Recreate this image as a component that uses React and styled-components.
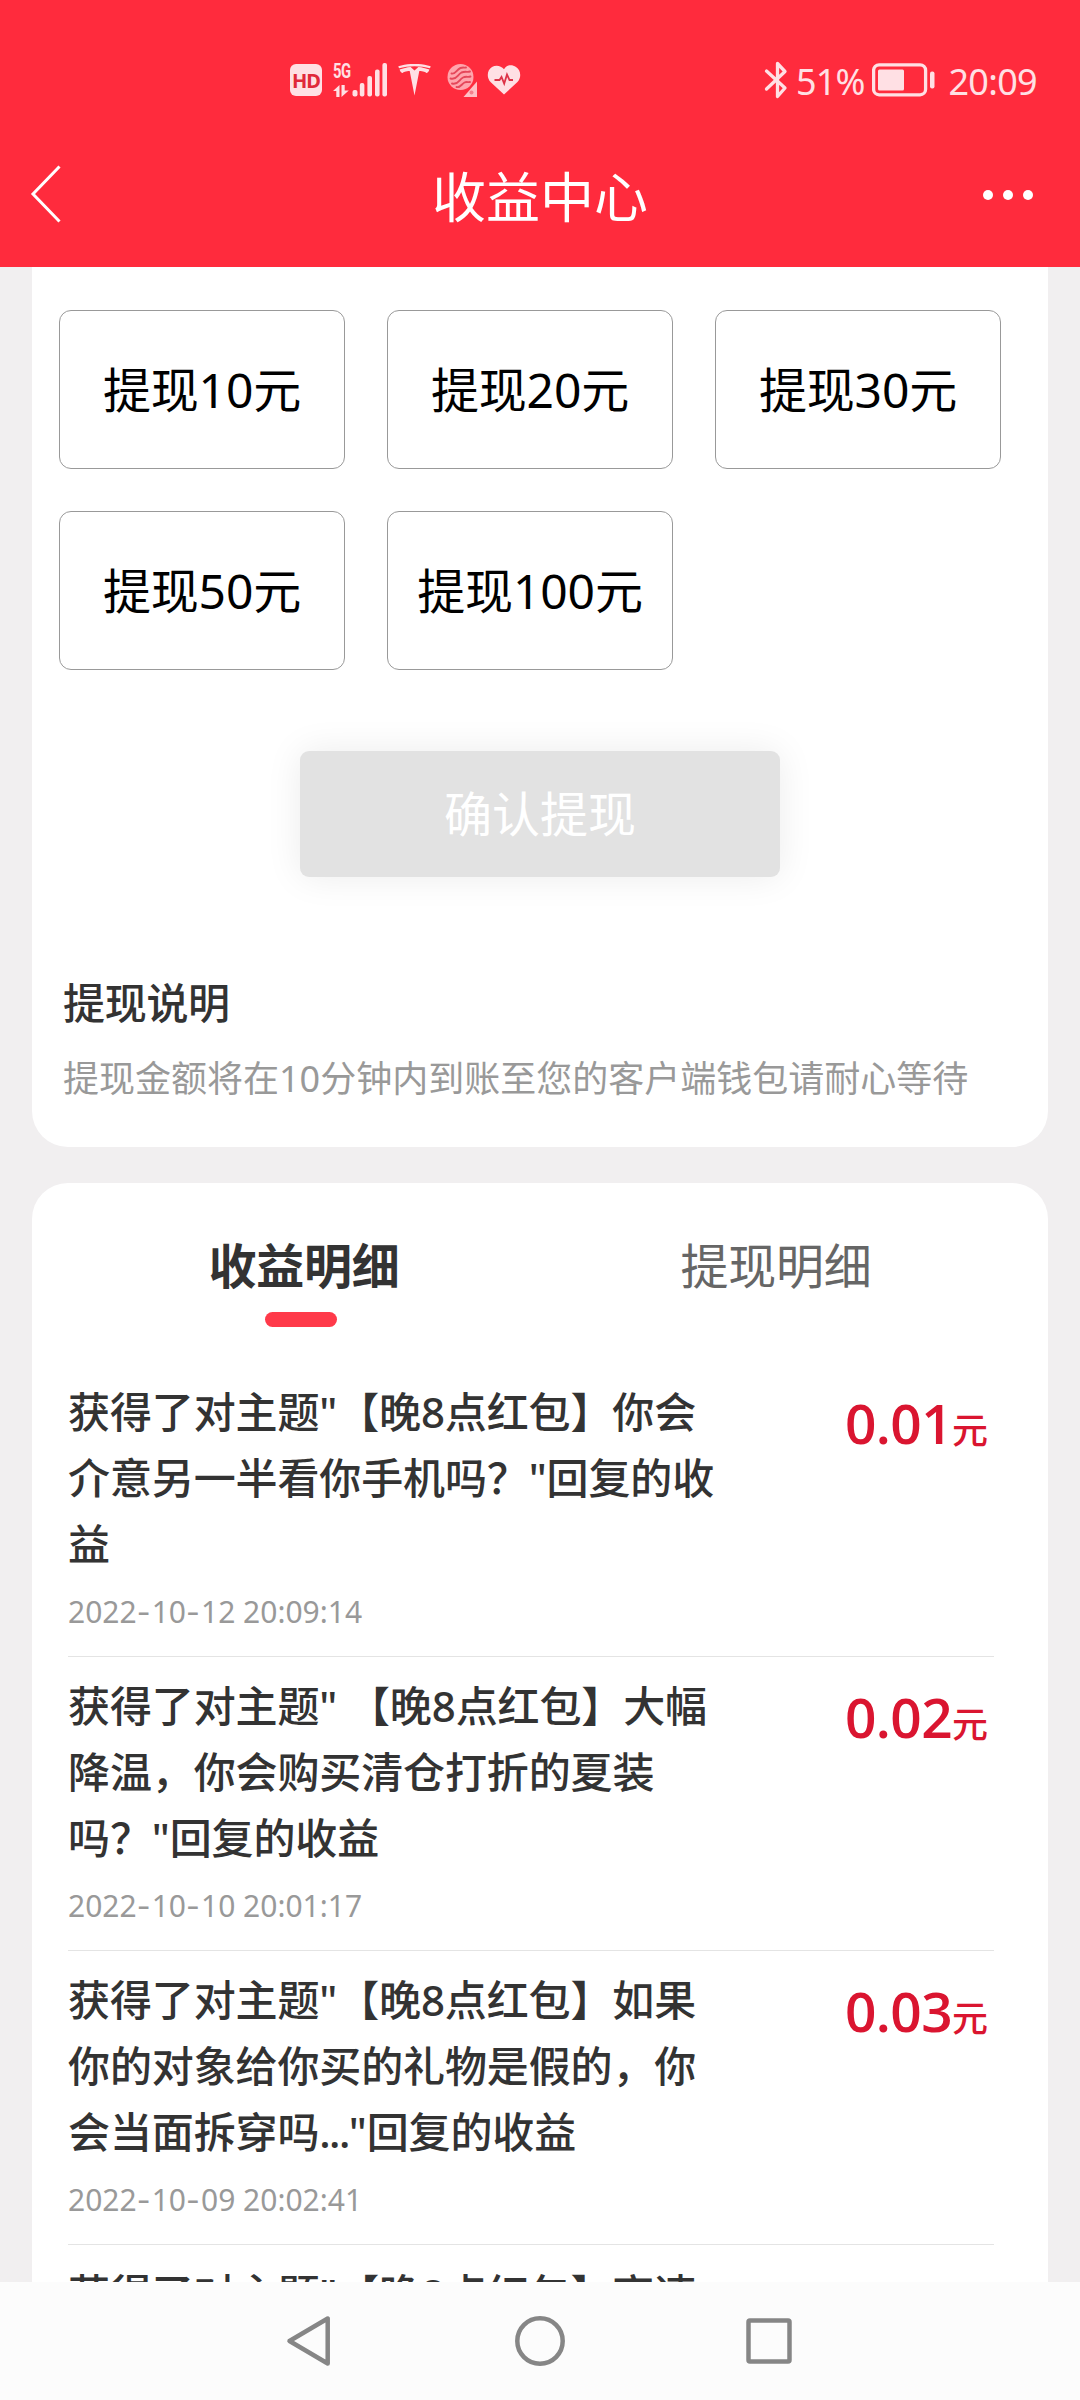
import React from "react";
import styled, { createGlobalStyle } from "styled-components";

const GlobalStyle = createGlobalStyle`
  * { box-sizing: border-box; }
  html, body { margin: 0; padding: 0; }
  body {
    font-family: "Noto Sans", "Noto Sans CJK SC", sans-serif;
    background: #f1eff0;
    text-spacing-trim: space-all;
  }
`;

const Screen = styled.div`
  width: 1080px;
  height: 2400px;
  overflow: hidden;
  display: flex;
  flex-direction: column;
  background: #f1eff0;
`;

const Header = styled.header`
  flex: none;
  height: 267px;
  background: #ff2b3d;
  color: #fff;
`;

const StatusBar = styled.div`
  height: 127px;
  padding: 40px 43px 7px 290px;
  display: flex;
  align-items: center;
  justify-content: space-between;
  color: #ffe0e4;
`;

const StatusGroup = styled.div`
  display: flex;
  align-items: center;
  height: 80px;
`;

const HdBadge = styled.span`
  width: 32px;
  height: 32px;
  border-radius: 6px;
  background: #ffe0e4;
  color: #e0293a;
  font: 700 20px/33px "Noto Sans", sans-serif;
  letter-spacing: -1px;
  text-align: center;
`;

const Network = styled.div`
  display: flex;
  margin-left: 11px;
`;

const NetworkType = styled.div`
  width: 18px;
  height: 34px;
  display: flex;
  flex-direction: column;
  justify-content: space-between;
  font: 700 20px/16px "Roboto", sans-serif;
  letter-spacing: -0.5px;
  white-space: nowrap;

  span {
    width: 24px;
    transform: scaleX(0.74);
    transform-origin: left;
  }
`;

const Icon = styled.svg`
  display: block;
  flex: none;
  margin-left: ${(p) => p.$left || 0}px;
`;

const StatusText = styled.span`
  font-size: 36px;
  line-height: 44px;
  letter-spacing: ${(p) => p.$spacing}px;
  margin-left: ${(p) => p.$left}px;
  padding-top: 4px;
`;

const TitleBar = styled.div`
  height: 140px;
  padding: 0 47px 6px 29px;
  display: grid;
  grid-template-columns: 1fr auto 1fr;
  align-items: center;
`;

const Title = styled.h1`
  margin: 0;
  padding: 5px 0 0 18px;
  font-size: 54px;
  line-height: 70px;
  font-weight: 400;
`;

const MoreDots = styled.span`
  justify-self: end;
  display: flex;
  gap: 10px;
  padding-top: 2px;

  i {
    width: 10px;
    height: 10px;
    border-radius: 50%;
    background: #fff;
  }
`;

const Content = styled.main`
  flex: 1;
  min-height: 0;
  overflow: hidden;
  padding: 0 32px;
  display: flex;
  flex-direction: column;
  gap: 36px;
`;

const WithdrawCard = styled.section`
  flex: none;
  height: 880px;
  padding: 43px 27px 0;
  background: #fff;
  border-radius: 0 0 36px 36px;
`;

const AmountGrid = styled.div`
  display: grid;
  grid-template-columns: repeat(3, 286px);
  grid-auto-rows: 159px;
  gap: 42px;
`;

const AmountButton = styled.button`
  border: 1px solid #999;
  border-radius: 12px;
  background: #fff;
  color: #000;
  padding: 1px 0 0;
  font: 400 48px/60px "Noto Sans", "Noto Sans CJK SC", sans-serif;
  letter-spacing: -0.15px;
`;

const ConfirmButton = styled.button`
  display: block;
  width: 480px;
  height: 126px;
  margin: 81px auto 0;
  border: 0;
  border-radius: 9px;
  background: #e2e2e2;
  color: #fff;
  padding: 0;
  font: 400 48px/60px "Noto Sans", "Noto Sans CJK SC", sans-serif;
  box-shadow: 0 0 36px rgba(0, 0, 0, 0.08);
`;

const NoteTitle = styled.h2`
  margin: 96px 4px 0;
  font-size: 42px;
  line-height: 60px;
  font-weight: 500;
  letter-spacing: -0.3px;
  color: #333;
`;

const NoteText = styled.p`
  margin: 21px 4px 0;
  font-size: 36px;
  line-height: 50px;
  white-space: nowrap;
  color: #999;
`;

const DetailCard = styled.section`
  flex: none;
  padding: 0 36px;
  background: #fff;
  border-radius: 36px 36px 0 0;
`;

const Tabs = styled.div`
  height: 180px;
  padding-top: 50px;
  display: grid;
  grid-template-columns: 1fr 1fr;
`;

const Tab = styled.div`
  display: flex;
  flex-direction: column;
  align-items: center;
  font-size: 48px;
  line-height: 66px;
  letter-spacing: -0.2px;
  font-weight: ${(p) => (p.$active ? 700 : 400)};
  color: ${(p) => (p.$active ? "#333" : "#666")};
`;

const TabMark = styled.span`
  width: 72px;
  height: 15px;
  margin: 13px 6px 0 0;
  border-radius: 8px;
  background: #ff3a4a;
`;

const Row = styled.article`
  height: 294px;
  width: 926px;
  padding-top: 16px;
  border-bottom: 1px solid #e4e4e4;
  display: flex;
  justify-content: space-between;
`;

const RowBody = styled.div`
  width: 650px;
`;

const RowText = styled.p`
  margin: 0;
  font-size: 42px;
  line-height: 65.9px;
  font-weight: 500;
  letter-spacing: -0.12px;
  color: #333;
`;

const Ellipsis = styled.span`
  letter-spacing: -1.6px;
`;

const RowDate = styled.time`
  display: block;
  margin-top: 15px;
  font-size: 30px;
  line-height: 40px;
  color: #999;
`;

const Dash = styled.span`
  font-family: Inter, sans-serif;
  letter-spacing: 1.2px;
`;

const Amount = styled.div`
  padding-right: 6px;
  display: flex;
  align-items: baseline;
  height: 80px;
  line-height: 87px;
  font-family: "Open Sans", "Noto Sans CJK SC", sans-serif;
  font-size: 55px;
  font-weight: 600;
  letter-spacing: -0.6px;
  color: #da1530;
`;

const Unit = styled.span`
  font-size: 36px;
  font-weight: 500;
  letter-spacing: 0;
`;

const NavBar = styled.nav`
  flex: none;
  height: 118px;
  padding-left: 285px;
  display: flex;
  align-items: center;
  background: #fcfcfc;
`;

const amounts = [10, 20, 30, 50, 100];

const records = [
  { text: '获得了对主题"【晚8点红包】你会介意另一半看你手机吗？"回复的收益', date: "2022-10-12 20:09:14", amount: "0.01" },
  { text: '获得了对主题" 【晚8点红包】大幅降温，你会购买清仓打折的夏装吗？"回复的收益', date: "2022-10-10 20:01:17", amount: "0.02" },
  { text: '获得了对主题"【晚8点红包】如果你的对象给你买的礼物是假的，你会当面拆穿吗..."回复的收益', date: "2022-10-09 20:02:41", amount: "0.03" },
  { text: '获得了对主题"【晚8点红包】高速' },
];

function TopicText({ value }) {
  const [before, after] = value.split("...");
  return (
    <RowText>
      {before}
      {after && <Ellipsis>...</Ellipsis>}
      {after}
    </RowText>
  );
}

function DateText({ value }) {
  return (
    <RowDate>
      {value.split("-").map((part, i) => (
        <React.Fragment key={i}>
          {i > 0 && <Dash>-</Dash>}
          {part}
        </React.Fragment>
      ))}
    </RowDate>
  );
}

function SignalIcon() {
  return (
    <Icon width="36" height="34" viewBox="350 63 36 34" fill="#ffe0e4">
      <rect x="351.5" y="90" width="5" height="6.5" rx="2" />
      <rect x="358.8" y="83" width="4.6" height="13.5" rx="2" />
      <rect x="366.4" y="76" width="4.6" height="20.5" rx="2" />
      <rect x="374" y="69.5" width="4.6" height="27" rx="2" />
      <rect x="381.4" y="63" width="4.6" height="33.5" rx="2" />
    </Icon>
  );
}

function ArrowsIcon() {
  return (
    <svg width="16" height="12" viewBox="0 0 16 12" fill="#ffe0e4">
      <path d="M0 6 6.500 0V12H3.300V6Z" />
      <path d="M8.500 0H11.700V5.600H15.800L8.500 12Z" />
    </svg>
  );
}

function TeslaIcon() {
  return (
    <Icon $left={11} width="33" height="32" viewBox="0 0 33 32" fill="#ffe0e4">
      <path d="M.3 2.200C10.500-.9 22.500-.9 32.700 2.200L32 4.200C22.500 1.500 10.500 1.500 1 4.200Z" />
      <path d="M1.600 5.500C5 4.300 9 3.300 12.600 3L16.500 6.500 20.400 3C24 3.300 28 4.300 31.400 5.500 30.800 7.700 29.700 8.700 28.200 9 28 8 25 7.200 21.300 7L16.500 31.500 11.700 7C8 7.200 5 8 4.800 9 3.300 8.700 2.200 7.700 1.600 5.500Z" />
    </Icon>
  );
}

function SpiralIcon() {
  return (
    <Icon $left={15} width="32" height="36" viewBox="446 62 32 36">
      <circle cx="460.500" cy="77" r="13" fill="#ffa5ad" />
      <g fill="none" stroke="#e5475a" strokeWidth="1.900" strokeLinecap="round">
        <path d="M451.500 73.500c4 1 5-4 9-5.500 3-1 4 0 5.500-.5" />
        <path d="M450.500 78.500c6 2 7-4 11-6 4-1.500 6 0 8.500-1" />
        <path d="M452 83.500c6 2 7-4 11-6 3-1.500 5 0 7.500-1" />
        <path d="M456.500 87c4 1 5-3 8-4.500 2-1 4 0 5.500-.5" />
      </g>
      <path d="M477 81.500V97H463.500Z" fill="#ffc0c5" />
      <circle cx="471.500" cy="92.500" r="2" fill="#f4808c" />
    </Icon>
  );
}

function HeartIcon() {
  return (
    <Icon $left={9} width="34" height="30" viewBox="0 0 34 30">
      <path d="M17 29.500 3.800 17.300C-1 12.300.300 4.700 5 2 9-.500 14 .500 17 4.300 20-.500 25-.500 29 2c4.700 2.700 6 10.300 1.200 15.300Z" fill="#ffe0e4" />
      <path d="M7.500 15H12.500L14.500 12 17.200 18.500 20 9.500 22.500 15H26" fill="none" stroke="#dd3347" strokeWidth="1.800" />
    </Icon>
  );
}

function BatteryIcon() {
  return (
    <Icon $left={8} width="63" height="34" viewBox="0 0 63 34">
      <rect x="1.600" y="1.800" width="52" height="30" rx="5.500" fill="none" stroke="#ffe0e4" strokeWidth="3.300" />
      <rect x="6" y="6.500" width="26" height="21" rx="1.500" fill="#ffe0e4" />
      <rect x="58" y="8.500" width="4.500" height="17" rx="2" fill="#ffe0e4" />
    </Icon>
  );
}

export default function App() {
  return (
    <>
      <GlobalStyle />
      <Screen>
        <Header>
          <StatusBar>
            <StatusGroup>
              <HdBadge>HD</HdBadge>
              <Network>
                <NetworkType>
                  <span>5G</span>
                  <ArrowsIcon />
                </NetworkType>
                <SignalIcon />
              </Network>
              <TeslaIcon />
              <SpiralIcon />
              <HeartIcon />
            </StatusGroup>
            <StatusGroup>
              <Icon width="24" height="38" viewBox="0 0 24 38" fill="none" stroke="#ffe0e4" strokeWidth="3.300" strokeLinejoin="round" strokeLinecap="round">
                <path d="M2.500 10 21 27 13.500 35.500V2.500L21 10.500 2.500 28" />
              </Icon>
              <StatusText $left={8} $spacing={-0.9}>51%</StatusText>
              <BatteryIcon />
              <StatusText $left={13} $spacing={-0.7}>20:09</StatusText>
            </StatusGroup>
          </StatusBar>
          <TitleBar>
            <Icon width="34" height="58" viewBox="0 0 34 58" fill="none" stroke="#fff" strokeWidth="3">
              <path d="M30.500 1.500 4 29 30.500 56.500" />
            </Icon>
            <Title>收益中心</Title>
            <MoreDots>
              <i />
              <i />
              <i />
            </MoreDots>
          </TitleBar>
        </Header>
        <Content>
          <WithdrawCard>
            <AmountGrid>
              {amounts.map((n) => (
                <AmountButton key={n}>提现{n}元</AmountButton>
              ))}
            </AmountGrid>
            <ConfirmButton>确认提现</ConfirmButton>
            <NoteTitle>提现说明</NoteTitle>
            <NoteText>提现金额将在10分钟内到账至您的客户端钱包请耐心等待</NoteText>
          </WithdrawCard>
          <DetailCard>
            <Tabs>
              <Tab $active>
                收益明细
                <TabMark />
              </Tab>
              <Tab>提现明细</Tab>
            </Tabs>
            {records.map((r) => (
              <Row key={r.text}>
                <RowBody>
                  <TopicText value={r.text} />
                  {r.date && <DateText value={r.date} />}
                </RowBody>
                {r.amount && (
                  <Amount>
                    {r.amount}
                    <Unit>元</Unit>
                  </Amount>
                )}
              </Row>
            ))}
          </DetailCard>
        </Content>
        <NavBar>
          <Icon width="48" height="52" viewBox="0 0 48 52" fill="none" stroke="#868686" strokeWidth="4.500" strokeLinejoin="round">
            <path d="M4.500 26 42.700 3.500V48.500Z" />
          </Icon>
          <Icon $left={181} width="52" height="52" viewBox="0 0 52 52" fill="none" stroke="#868686" strokeWidth="4.500">
            <circle cx="26" cy="26" r="22.700" />
          </Icon>
          <Icon $left={179} width="48" height="48" viewBox="0 0 48 48" fill="none" stroke="#868686" strokeWidth="4.500" strokeLinejoin="round">
            <rect x="3.500" y="3.500" width="41" height="41" rx="1.500" />
          </Icon>
        </NavBar>
      </Screen>
    </>
  );
}
